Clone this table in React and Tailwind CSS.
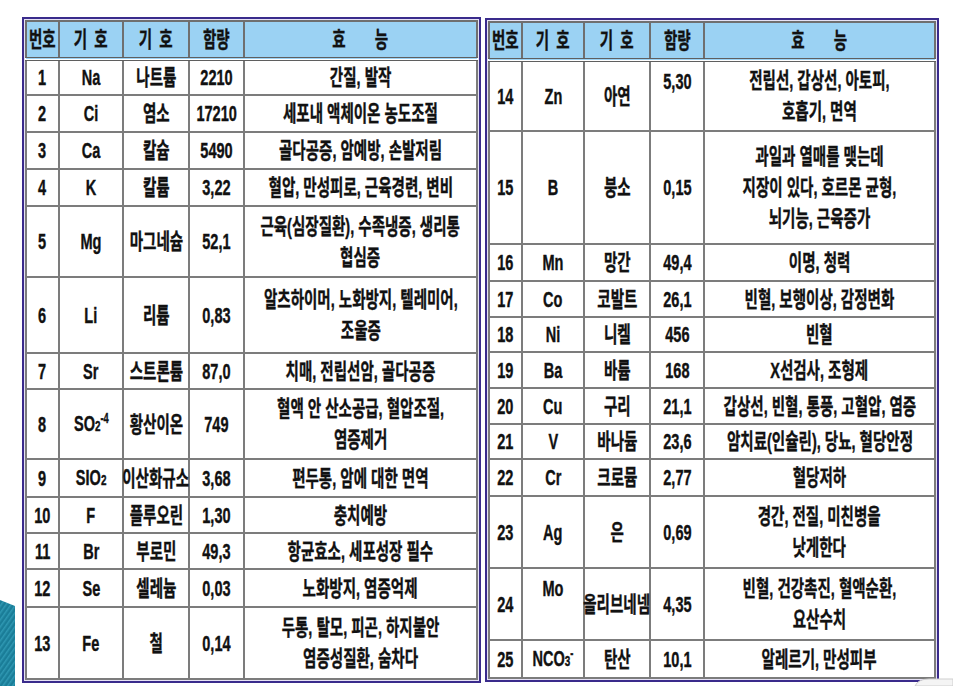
import React from 'react';

const LEFT_COLS = [33, 64, 66, 55, 233];
const RIGHT_COLS = [33, 62, 66, 54, 231];

const SO4 = (
  <>
    SO<span className="text-[15px]">2</span>
    <span className="align-super text-[14px] leading-none">-4</span>
  </>
);
const SIO2 = (
  <>
    SIO<span className="text-[15px]">2</span>
  </>
);
const NCO3 = (
  <>
    NCO<span className="text-[15px]">3</span>
    <span className="align-super text-[14px] leading-none">-</span>
  </>
);

// [번호, 기호, 이름, 함량, 효능 lines, row height, options]
const LEFT_ROWS = [
  ['1', 'Na', '나트륨', '2210', ['간질, 발작'], 36],
  ['2', 'Ci', '염소', '17210', ['세포내 액체이온 농도조절'], 37],
  ['3', 'Ca', '칼슘', '5490', ['골다공증, 암예방, 손발저림'], 37],
  ['4', 'K', '칼륨', '3,22', ['혈압, 만성피로, 근육경련, 변비'], 37],
  ['5', 'Mg', '마그네슘', '52,1', ['근육(심장질환), 수족냉증, 생리통', '협심증'], 71],
  ['6', 'Li', '리튬', '0,83', ['알츠하이머, 노화방지, 텔레미어,', '조울증'], 76],
  ['7', 'Sr', '스트론튬', '87,0', ['치매, 전립선암, 골다공증'], 36],
  ['8', SO4, '황산이온', '749', ['혈액 안 산소공급, 혈압조절,', '염증제거'], 70],
  ['9', SIO2, '이산화규소', '3,68', ['편두통, 암에 대한 면역'], 38],
  ['10', 'F', '플루오린', '1,30', ['충치예방'], 36],
  ['11', 'Br', '부로민', '49,3', ['항균효소, 세포성장 필수'], 36],
  ['12', 'Se', '셀레늄', '0,03', ['노화방지, 염증억제'], 38],
  ['13', 'Fe', '철', '0,14', ['두통, 탈모, 피곤, 하지불안', '염증성질환, 숨차다'], 72],
];

const RIGHT_ROWS = [
  ['14', 'Zn', '아연', '5,30', ['전립선, 갑상선, 아토피,', '호흡기, 면역'], 71, { amtTop: true }],
  ['15', 'B', '붕소', '0,15', ['과일과 열매를 맺는데', '지장이 있다, 호르몬 균형,', '뇌기능, 근육증가'], 113],
  ['16', 'Mn', '망간', '49,4', ['이명, 청력'], 37],
  ['17', 'Co', '코발트', '26,1', ['빈혈, 보행이상, 감정변화'], 36],
  ['18', 'Ni', '니켈', '456', ['빈혈'], 35],
  ['19', 'Ba', '바륨', '168', ['X선검사, 조형제'], 36],
  ['20', 'Cu', '구리', '21,1', ['갑상선, 빈혈, 통풍, 고혈압, 염증'], 36],
  ['21', 'V', '바나듐', '23,6', ['암치료(인슐린), 당뇨, 혈당안정'], 35],
  ['22', 'Cr', '크로뮴', '2,77', ['혈당저하'], 37],
  ['23', 'Ag', '은', '0,69', ['경간, 전질, 미친병을', '낫게한다'], 72],
  ['24', 'Mo', '올리브네넴', '4,35', ['빈혈, 건강촉진, 혈액순환,', '요산수치'], 72, { symTop: true }],
  ['25', NCO3, '탄산', '10,1', ['알레르기, 만성피부'], 38],
];

// condensed text: glyphs squeezed horizontally like the printed table
function T({ children }) {
  return (
    <div className="flex justify-center">
      <div className="shrink-0 whitespace-nowrap text-center scale-x-[0.66]">{children}</div>
    </div>
  );
}

function Cell({ children, top }) {
  return (
    <td className={`border-2 border-[#7c7c7c] p-0 ${top ? 'align-top pt-[4px]' : 'align-middle'}`}>
      <T>{children}</T>
    </td>
  );
}

function Table({ cols, rows, headH }) {
  const heads = ['번호', '기\u2002호', '기\u2002호', '함량', '효　　능'];
  return (
    <div className="border-2 border-[#3a2b8c] bg-[#e6e2f5] p-[1px]">
      <table
        className="table-fixed border-collapse bg-white text-[22px] font-bold leading-[31px] text-[#111] [-webkit-text-stroke:0.4px_#111]"
        style={{ width: cols.reduce((s, c) => s + c, 0) }}
      >
        <colgroup>
          {cols.map((w, i) => (
            <col key={i} style={{ width: w }} />
          ))}
        </colgroup>
        <thead>
          <tr style={{ height: headH }} className="bg-[#9bd2f3]">
            {heads.map((h, i) => (
              <th key={i} className="border-2 border-b-[4px] border-[#6f6f6f] border-b-[#5f5f5f] border-double p-0 font-bold">
                <T>{h}</T>
              </th>
            ))}
          </tr>
        </thead>
        <tbody>
          {rows.map(([no, sym, name, amt, eff, h, opt = {}]) => (
            <tr key={no} style={{ height: h }}>
              <Cell>{no}</Cell>
              <Cell top={opt.symTop}>{sym}</Cell>
              <Cell>{name}</Cell>
              <Cell top={opt.amtTop}>{amt}</Cell>
              <Cell>
                {eff.map((line, i) => (
                  <div key={i}>{line}</div>
                ))}
              </Cell>
            </tr>
          ))}
        </tbody>
      </table>
    </div>
  );
}

export default function App() {
  return (
    <div className="relative h-[686px] w-[953px] overflow-hidden bg-white font-['Liberation_Sans','Noto_Sans_CJK_KR',sans-serif]">
      <div className="flex items-start gap-[4px] pl-[22px] pt-[17px]">
        <Table cols={LEFT_COLS} rows={LEFT_ROWS} headH={38} />
        <div className="mt-[1px]">
          <Table cols={RIGHT_COLS} rows={RIGHT_ROWS} headH={38} />
        </div>
      </div>

      {/* slide decoration, bottom left */}
      <svg className="absolute left-0 top-[598px]" width="16" height="88" viewBox="0 0 16 88">
        <defs>
          <pattern id="stripes" width="4" height="4" patternUnits="userSpaceOnUse" patternTransform="rotate(35)">
            <rect width="4" height="4" fill="#1a7d98" />
            <rect width="1.5" height="4" fill="#2f98b3" />
          </pattern>
        </defs>
        <polygon points="0,2 15,8 15,88 0,88" fill="url(#stripes)" />
      </svg>

      {/* slide decoration, bottom right */}
      <svg className="absolute right-0 top-[676px]" width="40" height="10" viewBox="0 0 40 10">
        <path d="M2 10 Q5 3 16 3 L40 3 L40 10 Z" fill="#f4f4f4" stroke="#cfcfcf" strokeWidth="1" />
      </svg>
    </div>
  );
}
